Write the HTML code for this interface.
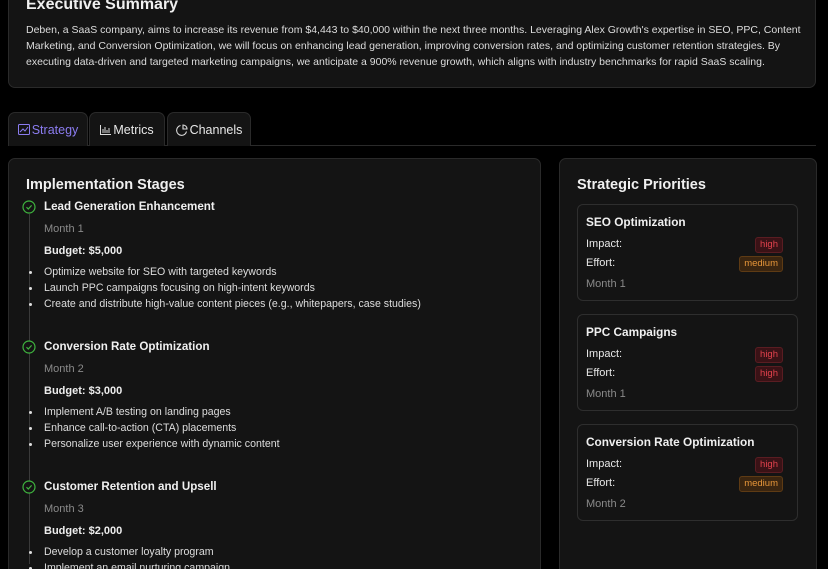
<!DOCTYPE html>
<html style="overflow:hidden;height:569px"><head><style>
*{box-sizing:border-box;margin:0;padding:0}
body{width:828px;height:569px;overflow:hidden;background:#000;font-family:"Liberation Sans",sans-serif;color:#e8e8e8;position:relative}
.card{position:absolute;background:#141414;border:1px solid #2a2a2a;border-radius:7px}
.abs{position:absolute;white-space:nowrap}
.p{font-size:10.5px;line-height:16px;color:#ddd}
.tab{position:absolute;top:112px;height:34px;background:#141414;border:1px solid #2a2a2a;border-bottom:none;border-radius:7px 7px 0 0;font-size:12.5px;display:flex;align-items:center;justify-content:center;gap:2px;color:#e8e8e8}
h2{font-size:14.5px;font-weight:bold;color:#f0f0f0}
.st{font-size:11.6px;font-weight:bold;color:#f0f0f0}
.m{font-size:11px;color:#8a8a8a}
.b{font-size:11px;font-weight:bold;color:#eee}
ul{list-style:none}
li{font-size:10.6px;line-height:16px;color:#ddd;position:relative;padding-left:18px}
li:before{content:"";position:absolute;left:3px;top:7px;width:3px;height:3px;border-radius:50%;background:#ddd}
.pc{position:absolute;left:577px;width:221px;height:97px;border:1px solid #2e2e2e;border-radius:6px;background:#141414}
.pc .t{position:absolute;left:8px;top:10px;font-size:11.8px;font-weight:bold;color:#f0f0f0}
.pc .l{position:absolute;left:8px;font-size:11px;color:#e8e8e8}
.pc .mo{position:absolute;left:8px;top:73px;font-size:11px;color:#8a8a8a}
.bd{position:absolute;right:14px;font-size:9.5px;padding:1px 4px;border-radius:3px;line-height:12px}
.hi{background:#3a1216;border:1px solid #5a1d22;color:#e0424c}
.me{background:#3a2510;border:1px solid #5e3b14;color:#e6963a}
</style></head><body>
<div class="card" style="left:8px;top:-30px;width:808px;height:118px"></div>
<div class="abs" style="left:26px;top:-4px;font-size:16px;font-weight:bold;color:#f0f0f0">Executive Summary</div>
<div class="abs p" style="left:26px;top:22px">Deben, a SaaS company, aims to increase its revenue from $4,443 to $40,000 within the next three months. Leveraging Alex Growth's expertise in SEO, PPC, Content</div>
<div class="abs p" style="left:26px;top:38px">Marketing, and Conversion Optimization, we will focus on enhancing lead generation, improving conversion rates, and optimizing customer retention strategies. By</div>
<div class="abs p" style="left:26px;top:54px">executing data-driven and targeted marketing campaigns, we anticipate a 900% revenue growth, which aligns with industry benchmarks for rapid SaaS scaling.</div>

<div class="abs" style="left:8px;top:145px;width:808px;height:1px;background:#2a2a2a"></div>
<div class="tab" style="left:8px;width:80px;color:#8b7cf0"><svg width="12" height="11" viewBox="0 0 12 11" fill="none" stroke="#8b7cf0" stroke-width="1"><rect x="0.5" y="0.5" width="11" height="10" rx="1"/><path d="M2 8l3-3 2 2 3-4"/></svg>Strategy</div>
<div class="tab" style="left:89px;width:76px"><svg width="11" height="10" viewBox="0 0 11 10" fill="none" stroke="#ddd" stroke-width="1"><path d="M0.5 0v9.5H11M3 8V4M5 8V2M7 8V5M9 8V3"/></svg>Metrics</div>
<div class="tab" style="left:167px;width:84px"><svg width="12" height="12" viewBox="0 0 12 12" fill="none" stroke="#ddd" stroke-width="1.1"><path d="M10.5 7.5A5 5 0 1 1 4.5 1.5"/><path d="M7 1v4h4A4 4 0 0 0 7 1z"/></svg>Channels</div>

<div class="card" style="left:8px;top:158px;width:533px;height:430px"></div>
<h2 class="abs" style="left:26px;top:177px">Implementation Stages</h2>
<div class="abs" style="left:29px;top:214px;width:1px;height:350px;background:#3a3a3a"></div>

<div class="abs" style="left:22px;top:200px"><svg width="14" height="14" viewBox="0 0 14 14" fill="#141414" stroke="#3fb43f" stroke-width="1.2"><circle cx="7" cy="7" r="6"/><path d="M4.5 7.2l1.8 1.8 3.3-3.6" fill="none"/></svg></div>
<div class="abs st" style="left:44px;top:200px">Lead Generation Enhancement</div>
<div class="abs m" style="left:44px;top:223px">Month 1</div>
<div class="abs b" style="left:44px;top:245px">Budget: $5,000</div>
<ul class="abs" style="left:26px;top:264px"><li>Optimize website for SEO with targeted keywords</li><li>Launch PPC campaigns focusing on high-intent keywords</li><li>Create and distribute high-value content pieces (e.g., whitepapers, case studies)</li></ul>

<div class="abs" style="left:22px;top:340px"><svg width="14" height="14" viewBox="0 0 14 14" fill="#141414" stroke="#3fb43f" stroke-width="1.2"><circle cx="7" cy="7" r="6"/><path d="M4.5 7.2l1.8 1.8 3.3-3.6" fill="none"/></svg></div>
<div class="abs st" style="left:44px;top:340px">Conversion Rate Optimization</div>
<div class="abs m" style="left:44px;top:363px">Month 2</div>
<div class="abs b" style="left:44px;top:385px">Budget: $3,000</div>
<ul class="abs" style="left:26px;top:404px"><li>Implement A/B testing on landing pages</li><li>Enhance call-to-action (CTA) placements</li><li>Personalize user experience with dynamic content</li></ul>

<div class="abs" style="left:22px;top:480px"><svg width="14" height="14" viewBox="0 0 14 14" fill="#141414" stroke="#3fb43f" stroke-width="1.2"><circle cx="7" cy="7" r="6"/><path d="M4.5 7.2l1.8 1.8 3.3-3.6" fill="none"/></svg></div>
<div class="abs st" style="left:44px;top:480px">Customer Retention and Upsell</div>
<div class="abs m" style="left:44px;top:503px">Month 3</div>
<div class="abs b" style="left:44px;top:525px">Budget: $2,000</div>
<ul class="abs" style="left:26px;top:544px"><li>Develop a customer loyalty program</li><li>Implement an email nurturing campaign</li></ul>

<div class="card" style="left:559px;top:158px;width:258px;height:430px"></div>
<h2 class="abs" style="left:577px;top:177px">Strategic Priorities</h2>

<div class="pc" style="top:204px"><div class="t">SEO Optimization</div><div class="l" style="top:33px">Impact:</div><div class="bd hi" style="top:32px">high</div><div class="l" style="top:52px">Effort:</div><div class="bd me" style="top:51px">medium</div><div class="mo">Month 1</div></div>
<div class="pc" style="top:314px"><div class="t">PPC Campaigns</div><div class="l" style="top:33px">Impact:</div><div class="bd hi" style="top:32px">high</div><div class="l" style="top:52px">Effort:</div><div class="bd hi" style="top:51px">high</div><div class="mo">Month 1</div></div>
<div class="pc" style="top:424px"><div class="t">Conversion Rate Optimization</div><div class="l" style="top:33px">Impact:</div><div class="bd hi" style="top:32px">high</div><div class="l" style="top:52px">Effort:</div><div class="bd me" style="top:51px">medium</div><div class="mo">Month 2</div></div>
</body></html>
